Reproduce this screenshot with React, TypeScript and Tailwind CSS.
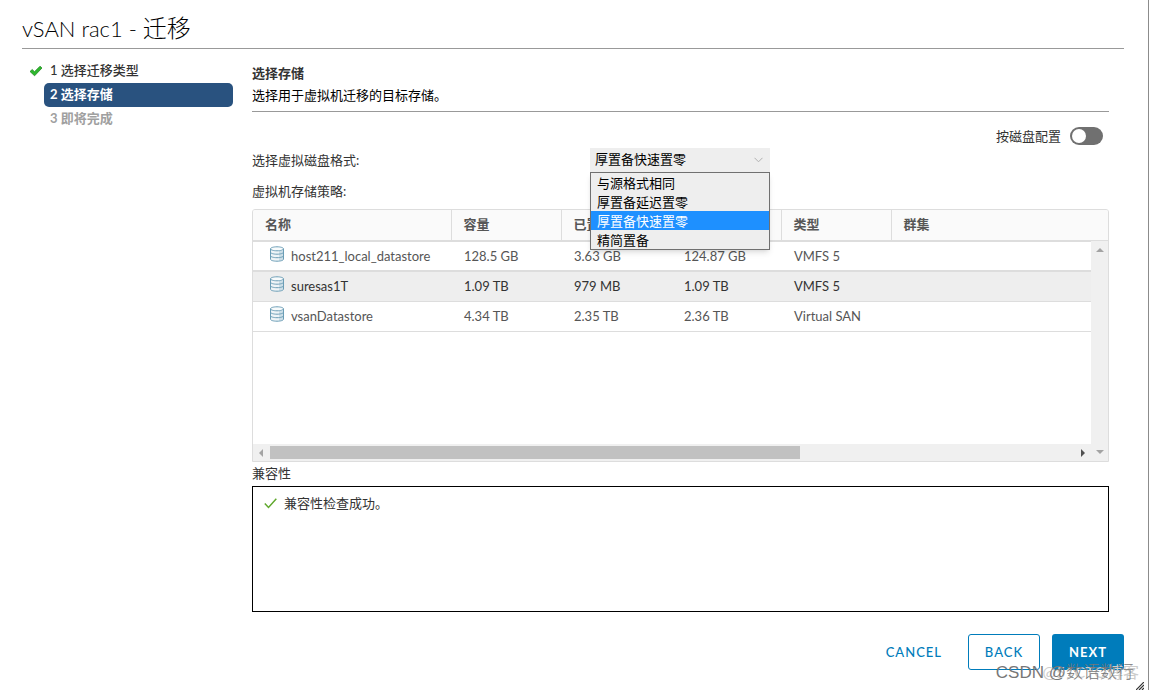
import React, { useState } from 'react';

const steps = [
  { label: '1 选择迁移类型', state: 'done' },
  { label: '2 选择存储', state: 'current' },
  { label: '3 即将完成', state: 'todo' }
];

const stepStyles: Record<string, string> = {
  done: 'font-medium text-[#333333]',
  current: 'bg-[#29527f] font-bold text-white',
  todo: 'font-bold text-[#a0a0a0]'
};

const formats = ['与源格式相同', '厚置备延迟置零', '厚置备快速置零', '精简置备'];

const columns = ['名称', '容量', '已置备', '可用', '类型', '群集'];

const datastores = [
  { name: 'host211_local_datastore', capacity: '128.5 GB', used: '3.63 GB', free: '124.87 GB', type: 'VMFS 5' },
  { name: 'suresas1T', capacity: '1.09 TB', used: '979 MB', free: '1.09 TB', type: 'VMFS 5' },
  { name: 'vsanDatastore', capacity: '4.34 TB', used: '2.35 TB', free: '2.36 TB', type: 'Virtual SAN' }
];

function DatastoreIcon() {
  return (
    <svg width="16" height="16" viewBox="0 0 16 16" fill="none" className="mb-1 shrink-0">
      <path d="M1.5 2.8v10.4c0 1.2 2.9 2 6.5 2s6.5-.8 6.5-2V2.8z" fill="#eef4f7" />
      <path d="M10 5h4v9l-4 1z" fill="#cddfe8" />
      <ellipse cx="8" cy="2.8" rx="6.5" ry="2" fill="#f8fbfc" />
      <path
        d="M1.5 2.8v10.4c0 1.2 2.9 2 6.5 2s6.5-.8 6.5-2V2.8M1.5 2.8c0 1.1 2.9 2 6.5 2s6.5-.9 6.5-2-2.9-2-6.5-2-6.5.9-6.5 2zM1.5 6.2c0 1.1 2.9 2 6.5 2s6.5-.9 6.5-2M1.5 9.7c0 1.1 2.9 2 6.5 2s6.5-.9 6.5-2"
        stroke="#6b9db6"
      />
    </svg>
  );
}

function Arrow({ points, color }: { points: string; color: string }) {
  return (
    <svg width="8" height="8" viewBox="0 0 8 8">
      <polygon points={points} fill={color} />
    </svg>
  );
}

export default function App() {
  const [format, setFormat] = useState('厚置备快速置零');
  const [selected, setSelected] = useState('suresas1T');

  return (
    <div className="relative flex min-h-screen flex-col border-r border-[#8c8c8c] bg-white pl-[22px] pr-6 font-['Lato','Noto_Sans_CJK_SC',sans-serif] text-[13px] leading-[22px] text-[#333333]">
      <header className="border-b border-[#999999] pt-3 pb-1">
        <h1 className="text-2xl font-light text-black">
          <span className="text-[22px]">vSAN rac1 - </span>迁移
        </h1>
      </header>

      <div className="flex flex-1 gap-[19px]">
        <ol className="w-[211px] shrink-0 pt-[10px]">
          {steps.map((step) => (
            <li key={step.label} className="flex items-center">
              <span className="w-[22px] shrink-0 pl-2">
                {step.state === 'done' && (
                  <svg width="12" height="12" viewBox="0 0 12 12">
                    <path d="M0 6.5 2.2 4.5 4.5 6.7 10 1.2 12 3 4.6 10.8z" fill="#2db82d" stroke="#188018" strokeWidth=".7" />
                  </svg>
                )}
              </span>
              <span className={`h-6 flex-1 rounded-[5px] px-[6px] leading-[22px] ${stepStyles[step.state]}`}>{step.label}</span>
            </li>
          ))}
        </ol>

        <main className="min-w-0 flex-1 pt-[13px] pr-[15px]">
          <div className="border-b border-[#999999] pb-[5px]">
            <h2 className="font-bold">选择存储</h2>
            <p className="text-black">选择用于虚拟机迁移的目标存储。</p>
          </div>

          <label className="flex items-center justify-end gap-[9px] pt-[13px] pb-px pr-[6px]">
            按磁盘配置
            <input
              type="checkbox"
              role="switch"
              className="h-[18px] w-[33px] appearance-none rounded-full bg-[#707070] p-[2px] before:block before:size-[14px] before:rounded-full before:bg-white checked:bg-[#318700] checked:before:ml-auto"
            />
          </label>

          <div className="flex items-center">
            <label htmlFor="format" className="w-[338px] shrink-0">选择虚拟磁盘格式:</label>
            <div className="relative w-[180px]">
              <select
                id="format"
                value={format}
                onChange={(e) => setFormat(e.target.value)}
                className="block h-6 w-full appearance-none bg-[#eeeeee] px-[5px] pb-[2px] text-black"
              >
                {formats.map((f) => (
                  <option key={f}>{f}</option>
                ))}
              </select>
              <svg width="9" height="6" viewBox="0 0 9 6" className="pointer-events-none absolute top-[9px] right-[7px]">
                <path d="M.5.8l4 4 4-4" fill="none" stroke="#b0b0b0" />
              </svg>
              <ul className="absolute top-full left-0 z-10 w-full border border-[#707070] bg-[#eeeeee] text-black shadow-md">
                {formats.map((f) => (
                  <li key={f}>
                    <button
                      onClick={() => setFormat(f)}
                      className={`block h-[19px] w-full px-[6px] text-left leading-[18px] ${f === format ? 'bg-[#1e90ff] text-white' : ''}`}
                    >
                      {f}
                    </button>
                  </li>
                ))}
              </ul>
            </div>
          </div>

          <p className="pt-2 pb-[7px]">虚拟机存储策略:</p>

          <div className="relative h-[253px] overflow-hidden rounded-t-[3px] border border-[#dddddd]">
            <table className="w-full table-fixed border-collapse text-left text-[#565656]">
              <thead>
                <tr className="h-[31px] border-b-2 border-[#dddddd] bg-[#fafafa]">
                  {columns.map((column, index) => (
                    <th
                      key={column}
                      className={`px-3 pb-[2px] font-bold ${index === 0 ? 'w-[198px] border-r' : index < 5 ? 'w-[110px] border-r' : ''} border-[#dddddd]`}
                    >
                      {column}
                    </th>
                  ))}
                </tr>
              </thead>
              <tbody>
                {datastores.map((store) => (
                  <tr
                    key={store.name}
                    onClick={() => setSelected(store.name)}
                    className={`h-[30px] border-b border-[#dddddd] ${store.name === selected ? 'border-t-2 bg-[#eeeeee] text-[#333333]' : ''}`}
                  >
                    <td className="pl-4">
                      <span className="flex items-center gap-[6px]">
                        <DatastoreIcon />
                        {store.name}
                      </span>
                    </td>
                    <td className="px-[13px]">{store.capacity}</td>
                    <td className="px-[13px]">{store.used}</td>
                    <td className="px-[13px]">{store.free}</td>
                    <td className="px-[13px]">{store.type}</td>
                    <td></td>
                  </tr>
                ))}
              </tbody>
            </table>

            <div className="absolute top-[31px] right-0 bottom-0 flex w-[17px] flex-col items-center justify-between bg-[#f0f0f0] py-[5px]">
              <Arrow points="0,6 4,2 8,6" color="#a3a3a3" />
              <Arrow points="0,2 4,6 8,2" color="#a3a3a3" />
            </div>
            <div className="absolute right-[17px] bottom-0 left-0 flex h-[17px] items-center gap-1 bg-[#f0f0f0] px-[5px]">
              <Arrow points="5,0 1,4 5,8" color="#a3a3a3" />
              <div className="h-[13px] w-[64%] bg-[#c1c1c1]" />
              <span className="ml-auto flex">
                <Arrow points="3,0 7,4 3,8" color="#505050" />
              </span>
            </div>
          </div>

          <h3>兼容性</h3>
          <div className="mt-[2px] h-[126px] border border-black px-[11px] py-[5px]">
            <p className="flex items-center gap-[7px]">
              <svg width="13" height="11" viewBox="0 0 13 11">
                <path d="M.8 5.5l3.7 4L12.3.8" fill="none" stroke="#60a82d" strokeWidth="1.5" />
              </svg>
              兼容性检查成功。
            </p>
          </div>
        </main>
      </div>

      <footer className="flex justify-end gap-3 pt-[22px] pb-5 font-medium tracking-[1px] text-[#007cbb]">
        <button className="h-9 px-[14px]">CANCEL</button>
        <button className="h-9 w-[72px] rounded-[3px] border border-[#007cbb]">BACK</button>
        <button className="h-9 w-[72px] rounded-[3px] bg-[#007cbb] font-bold text-white">NEXT</button>
      </footer>

      <span className="pointer-events-none absolute right-[9px] bottom-[6px] text-base text-[#cccccc]">@51CTO博客</span>
      <span className="pointer-events-none absolute right-[14px] bottom-[6px] font-['Liberation_Sans','Noto_Sans_CJK_SC',sans-serif] text-[17px] font-light text-[#777777]">
        CSDN @数语数行
      </span>
      <svg width="8" height="8" viewBox="0 0 8 8" className="absolute right-[4px] bottom-0">
        <path d="M0 8l8-8M3 8l5-5M6 8l2-2" stroke="#333333" strokeWidth="1.2" />
      </svg>
    </div>
  );
}
